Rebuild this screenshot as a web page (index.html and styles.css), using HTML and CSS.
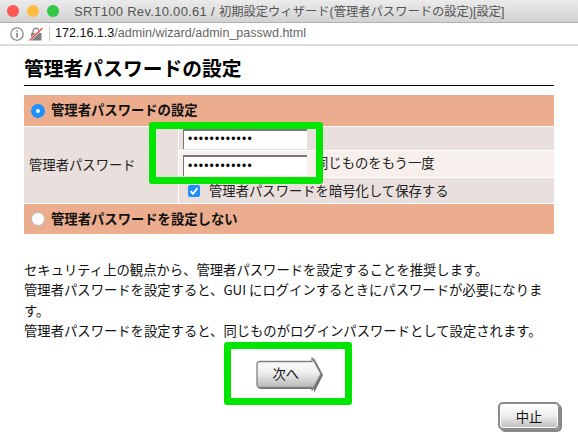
FILE: index.html
```html
<!DOCTYPE html>
<html lang="ja">
<head>
<meta charset="utf-8">
<title>SRT100</title>
<link rel="stylesheet" href="styles.css">
</head>
<body>
<header class="titlebar">
  <div class="lights"><i class="light red"></i><i class="light yellow"></i><i class="light green"></i></div>
  <div class="wintitle">SRT100 Rev.10.00.61 / <span class="wintitle-ja">初期設定ウィザード(管理者パスワードの設定)[設定]</span></div>
</header>
<div class="urlbar">
  <svg class="info" width="14" height="14" viewBox="0 0 14 14"><circle cx="7" cy="7" r="6.2" fill="none" stroke="#777" stroke-width="1.1"/><rect x="6.4" y="5.8" width="1.3" height="4.8" fill="#666"/><rect x="6.4" y="3.3" width="1.3" height="1.4" fill="#666"/></svg>
  <svg class="lock" width="14" height="14" viewBox="0 0 14 14"><path d="M4 6V4.5a3.2 3.2 0 0 1 6.4 0V6" fill="none" stroke="#8a8a8a" stroke-width="1.4"/><rect x="2" y="6" width="10.5" height="7.5" fill="#808080"/><path d="M0.5 13.5L13.5 1" stroke="#ffffff" stroke-width="2.4"/><path d="M0.5 13.5L13.5 1" stroke="#e8392c" stroke-width="1.1"/></svg>
  <span class="urltext"><span class="host">172.16.1.3</span>/admin/wizard/admin_passwd.html</span>
</div>
<main class="page">
  <h1 class="heading">管理者パスワードの設定</h1>
  <section class="form">
    <div class="band"><span class="radio on"></span>管理者パスワードの設定</div>
    <div class="detail">
      <div class="label">管理者パスワード</div>
      <div class="fields">
        <div class="row row-a"><span class="pw">••••••••••••</span></div>
        <div class="row row-b"><span class="pw pw-tall">••••••••••••</span><span class="hint">同じものをもう一度</span></div>
        <div class="row row-c"><span class="check"><svg width="12" height="12" viewBox="0 0 12 12"><path d="M2.6 6.2L5 8.8L9.4 3.2" fill="none" stroke="#fff" stroke-width="1.9"/></svg></span>管理者パスワードを暗号化して保存する</div>
      </div>
    </div>
    <div class="band band-last"><span class="radio"></span>管理者パスワードを設定しない</div>
  </section>
  <div class="notes">
    <p>セキュリティ上の観点から、管理者パスワードを設定することを推奨します。</p>
    <p>管理者パスワードを設定すると、GUI にログインするときにパスワードが必要になります。</p>
    <p>管理者パスワードを設定すると、同じものがログインパスワードとして設定されます。</p>
  </div>
  <div class="next-wrap">
    <button class="next" type="button">
      <svg class="next-shape" width="67" height="37" viewBox="0 0 67 37"><defs><linearGradient id="g" x1="0" y1="0" x2="0" y2="1"><stop offset="0" stop-color="#fff"/><stop offset="0.45" stop-color="#efefef"/><stop offset="1" stop-color="#adadad"/></linearGradient></defs><path d="M5 7H58V2L67 19L58 37V33H5Q2 33 2 30V10Q2 7 5 7Z" fill="#707070"/><path d="M4 5.5H56V1.5L65 18L56 34.5V31.5H4Q1 31.5 1 28.5V8.5Q1 5.5 4 5.5Z" fill="url(#g)" stroke="#808080" stroke-width="1.3"/></svg>
      <span class="next-label">次へ</span>
    </button>
  </div>
  <div class="cancel-wrap"><button class="cancel" type="button">中止</button></div>
</main>
<div class="mark mark-fields"></div>
<div class="mark mark-next"></div>
</body>
</html>
```

FILE: styles.css
```css
* { box-sizing: border-box; }
html, body { margin: 0; padding: 0; }
body {
  width: 578px;
  height: 438px;
  overflow: hidden;
  position: relative;
  background: #fff;
  color: #111;
  font-family: "Noto Sans CJK JP", "Liberation Sans", sans-serif;
  font-size: 13.33px;
}
.titlebar {
  height: 23px;
  background: linear-gradient(#ebebeb, #d2d2d2);
  border-bottom: 1px solid #b1b1b1;
  display: flex;
  align-items: center;
  padding-left: 7px;
}
.lights { display: flex; gap: 8px; width: 67px; }
.light { width: 12px; height: 12px; border-radius: 50%; display: block; }
.red { background: #fc5753; }
.yellow { background: #fdbc40; }
.green { background: #33c748; }
.wintitle { font-size: 13px; letter-spacing: 0.3px; color: #555; white-space: nowrap; font-family: "Liberation Sans", "Noto Sans CJK JP", sans-serif; }
.wintitle-ja { font-size: 12.3px; letter-spacing: 0; }
.urlbar {
  height: 23px;
  background: #fff;
  border-bottom: 2px solid #dcdcdc;
  display: flex;
  align-items: center;
  padding-left: 10px;
}
.info { margin-right: 5px; }
.lock { margin-right: 6px; }
.urltext { border-left: 1px solid #ccc; padding-left: 5px; font-size: 12.55px; color: #666; font-family: "Liberation Sans", sans-serif; line-height: 15px; }
.host { color: #111; }
.page { padding: 9px 24px 0; height: 392px; position: relative; }
.heading { margin: 0; height: 31px; padding-top: 1px; font-size: 19.8px; line-height: 24px; font-weight: 700; color: #000; border-bottom: 1px solid #000; }
.form { margin-top: 9px; width: 530px; }
.band { height: 31px; background: #ecad8f; display: flex; align-items: center; padding: 0 0 2px 7px; font-weight: 700; color: #111; }
.band-last { height: 30px; }
.radio { width: 14px; height: 14px; border-radius: 50%; background: #fff; border: 1px solid #bbb; margin: 2px 6px 0 0; }
.radio.on { border: 5px solid #1e90ff; }
.detail { display: flex; background: #e9dfdd; border-top: 1px solid #fff; border-bottom: 1px solid #fff; height: 78px; }
.label { width: 154px; display: flex; align-items: center; padding: 0 0 1px 5px; color: #222; }
.fields { flex: 1; border-left: 1px solid #fff; display: flex; flex-direction: column; }
.row { display: flex; padding-left: 4px; }
.row-a { height: 24px; border-bottom: 1px solid #fff; align-items: flex-end; padding-bottom: 1px; }
.row-b { height: 27px; background: #f7efeb; border-bottom: 1px solid #fff; align-items: flex-end; padding-bottom: 1px; }
.row-c { height: 25px; padding-left: 9px; color: #222; align-items: center; }
.pw { width: 124px; height: 20px; background: #fff; border-top: 2px solid #777; border-left: 1px solid #777; font: 12px/17px "Liberation Sans", sans-serif; color: #000; padding-left: 4px; letter-spacing: 1.2px; overflow: hidden; white-space: nowrap; }
.pw-tall { height: 21px; line-height: 18px; }
.hint { margin: 0 0 2px 8px; color: #222; align-self: center; }
.check { width: 12px; height: 12px; border-radius: 2px; background: #1e8fff; margin-right: 9px; display: block; }
.check svg { display: block; }
.notes { margin-top: 26px; width: 530px; line-height: 20.3px; color: #111; }
.notes p { margin: 0; }
.next-wrap { margin-top: 15px; display: flex; justify-content: center; }
.next { position: relative; width: 67px; height: 37px; padding: 0; border: 0; background: none; font-family: inherit; }
.next-shape { display: block; }
.next-label { position: absolute; left: 17px; top: 9px; font-size: 13.33px; line-height: 18px; color: #111; }
.cancel-wrap { position: absolute; top: 356px; left: 498px; display: flex; }
.cancel { width: 62px; height: 28px; padding: 0; border: 2px solid #8a8a8a; border-radius: 5px; background: linear-gradient(#fff, #eee 50%, #bbb); box-shadow: 2px 2px 0 #888, inset 0 0 0 1px #fff; font-family: inherit; font-size: 13.33px; color: #111; }
.mark { position: absolute; border: 7px solid #00e600; border-radius: 3px; }
.mark-fields { left: 149px; top: 122px; width: 174px; height: 62px; }
.mark-next { left: 224px; top: 342px; width: 128px; height: 63px; }
```
